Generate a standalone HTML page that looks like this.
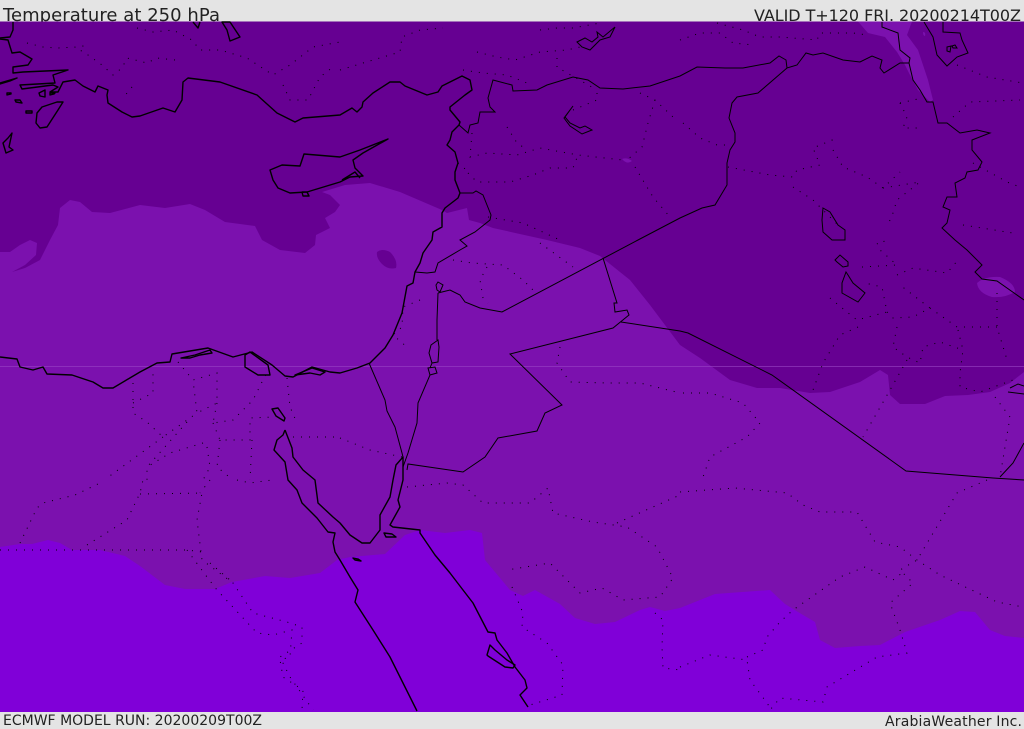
<!DOCTYPE html>
<html><head><meta charset="utf-8"><title>Temperature at 250 hPa</title>
<style>html,body{margin:0;padding:0;width:1024px;height:729px;overflow:hidden;background:#e4e4e4}svg{display:block}text{font-family:"DejaVu Sans",sans-serif;fill:#222}</style></head><body>
<svg xmlns="http://www.w3.org/2000/svg" width="1024" height="729" viewBox="0 0 1024 729">
<rect width="1024" height="729" fill="#e4e4e4"/>
<text x="3" y="21" font-size="18" textLength="217">Temperature at 250 hPa</text>
<text x="754" y="21" font-size="16" textLength="267">VALID T+120 FRI. 20200214T00Z</text>
<text x="3" y="725" font-size="14" textLength="259">ECMWF MODEL RUN: 20200209T00Z</text>
<text x="885" y="726" font-size="14" textLength="137">ArabiaWeather Inc.</text>
<rect y="21.5" width="1024" height="690.5" fill="#8000d8"/>
<path fill="#7b11ae" d="M0,547L20,544 32,544 48,540 60,543 72,550 100,550 125,556 140,566 165,585 185,589 215,589 232,582 265,576 290,578 320,573 337,560 350,557 385,554 405,535 420,530 445,533 470,530 482,533 485,560 495,572 510,590 523,596 535,590 560,604 575,618 595,624 615,622 640,610 650,607 665,611 680,608 715,594 770,590 785,604 798,612 815,622 820,640 835,648 860,646 880,645 905,632 940,620 960,611 975,612 990,630 1005,636 1024,638V21.5H0Z"/>
<path fill="#660092" d="M0,252L10,252 20,245 30,240 37,243 36,255 25,265 12,272 25,268 40,260 50,240 58,225 60,208 70,200 80,202 92,212 110,213 140,205 165,208 190,204 205,210 225,222 255,226 262,240 280,250 305,253 315,245 316,235 330,228 325,218 335,212 340,205 330,195 322,192 345,185 370,183 400,192 442,210 447,213 467,208 469,220 480,223 493,228 547,240 580,248 600,256 630,280 650,305 680,345 700,358 730,380 757,388 780,388 810,393 830,392 860,382 880,370 888,375 890,395 900,404 925,404 945,396 968,395 990,392 1010,383 1024,372V21.5H0Z"/>
<path fill="#7b11ae" d="M858,21.5L868,33 885,37 897,52 905,65 910,75 918,90 930,102 933,100 928,80 918,50 907,35 912,21.5ZM977,283Q985,276 1000,277 1015,283 1015,292 1005,298 992,297 978,293 977,283ZM622,159Q627,157 632,161 627,165 622,159ZM923,32Q926,32 925,36 923,36 923,32Z"/>
<path fill="#660092" d="M377,252Q382,248 390,252 398,260 396,268 388,270 382,264 376,258 377,252Z"/>
<rect y="366" width="1024" height="1" fill="#9a45c4" opacity=".6"/>
<g fill="none" stroke="#000" stroke-width="1" stroke-dasharray="1 7">
<path d="M27,43L43,47 58,48 77,47 90,45M137,28L153,32 173,30 192,40 200,50 220,50 247,58 273,75 290,65 313,47 340,42M175,60L157,58 147,63 127,58 122,68 113,75 102,65 88,55 75,47M132,87L123,98M283,85L290,100 308,100 320,77 333,67"/>
<path d="M340,70L373,60 400,52 402,37 420,30 443,28M477,52L497,57 515,60 540,52 567,50 580,47M463,70L483,73 507,75 527,83M540,30L557,28 573,28 600,23M557,58L557,68 562,70 597,90M472,133L470,157 487,153 517,155 540,148 578,155 623,160M468,173L477,182 510,182 533,175 550,168 573,168 578,155M635,167L653,197 670,217M573,110L597,100 597,90M640,93L655,100 673,117M655,100L648,123 642,147 627,160M507,127L517,143 523,147M458,163L470,173M488,217L523,223 560,240"/>
<path d="M680,40L700,33 720,33 733,43 753,45M717,23L743,30 760,37 780,37 817,40 820,33 853,33 867,35M683,123L700,138 717,145 730,145M728,167L770,175 793,177 797,170 820,165 813,148 837,138M833,150L843,167 867,177 883,188 900,172M883,188L920,182 897,200 893,213 887,227M900,103L922,98M900,103L907,117 903,128 920,128M953,117L970,102 1020,100M957,65L987,77 1023,83M973,163L1007,182 1020,187M963,225L1013,233M793,187L813,200 840,227"/>
<path d="M830,298L847,312 857,320 887,312 882,287 865,283M887,312L893,318 913,317 930,308 922,302 900,285M862,267L897,265 880,250 877,243 890,240M897,275L913,268 947,273 958,260M930,308L957,327 997,327M958,330L963,350 960,373 960,387 980,392 1013,380M897,327L893,347 907,357 920,363 923,347 940,342 963,350M858,327L840,335 823,363 813,390M907,360L890,390 863,437M997,293L997,327 1008,363M995,397L1010,417 1000,477M683,393L710,393 743,403 760,423 747,437 710,457 702,480"/>
<path d="M540,243L573,267M453,260L472,263 503,265 523,280 533,290M487,267L480,280 483,298 488,303M420,300L403,307 402,327 393,335 407,347M560,347L557,363 570,382 607,383 640,383 680,393M340,438L370,450 402,457"/>
<path d="M407,487L447,483 463,485 483,503 530,503 548,488 553,513 593,522 627,527 657,547 673,578 660,597 623,600 602,588 580,593 550,563 507,570M617,523L680,495 680,492 735,488 787,493 803,505 820,512 857,512 875,542 900,547 917,560 940,575 997,602 1023,607M987,480L957,493 917,560 900,570 913,583 890,603 900,630 907,653 877,657 827,687 823,702 780,698 770,710M680,667L710,655 747,660 750,680 767,703 772,711M747,657L763,650 767,637 780,622 793,610 840,577 865,567 893,580 902,573M512,587L523,613 522,627 547,643 563,665 562,695 530,705M655,613L663,620 662,647 663,668 680,670"/>
<path d="M0,550L187,550 202,552M20,543L37,508 43,503 75,495 102,482M87,545L127,520 140,493 143,480M140,494L202,493 197,520 202,560 233,583 253,613 287,622 302,627 302,643 280,657 290,677 313,710M187,550L207,577 217,590 257,633 273,635 292,630 290,657 280,660 283,677 303,690 302,710M210,563L230,580M210,480L200,493M237,480L250,483 272,480"/>
<path d="M133,383L133,413 147,422 163,437 197,413 193,380 217,373 217,403 197,413M133,403L153,393 153,370M163,437L107,478M187,422L147,467 147,480M217,403L213,423 233,420 253,400 263,380 267,373M213,423L220,440 250,440 250,418 273,417M203,443L170,453 147,467M207,447L210,467 203,480M220,440L217,467 233,480M252,440L250,480M178,362L193,380M287,378L290,407 297,423M293,437L337,437"/>
</g>
<g fill="none" stroke="#000" stroke-width="1.4" stroke-linejoin="round">
<path d="M13,22L13,30 10,37 0,38M0,39L8,40 12,53 20,52 32,59 28,65 13,67 13,73 23,72 68,70 53,75 55,83 20,85 22,89 53,85 58,87 50,92 58,92 63,82 75,80 83,86 95,92 98,86 108,90 107,95 108,103 122,112 132,117 140,116 163,108 175,112 182,100 183,82 188,78 220,82 257,95 277,113 295,122 303,118 340,115 352,108 357,112 362,107 363,102 373,93 390,82 400,82 405,86 427,95 438,92 442,86 450,82 462,76 470,80 472,90 465,95 450,107 450,110 460,122 459,125 452,132 450,140 447,145 455,152 458,163 455,172 455,180 460,193 458,198 445,208 442,213 442,227 433,232 432,240 423,253 420,263 415,272 413,283 407,286 402,313 393,335 385,348 370,363 357,368 340,373 330,372 312,367 293,377 285,376 272,365 252,352 233,357 208,348 172,354 170,362 157,363 140,372 113,388 103,388 93,382 72,375 47,374 43,367 33,370 20,367 17,359 0,357"/>
<path d="M181,358L195,355 210,350 212,353 200,355 190,358ZM245,355L250,352 268,365 270,375 258,375 245,367ZM295,375L312,368 325,372 320,375 310,373Z"/>
<path d="M285,430L283,435 277,440 274,450 285,462 288,480 297,490 302,503 317,518 328,532 335,533 333,542 335,552 340,560 350,577 358,590 355,602 373,630 390,657 408,693 417,711M285,430L292,448 293,457 303,470 315,480 318,503 333,517 340,523 350,535 362,543 370,543 380,530 380,515 390,497 393,480 396,465 403,457 403,467 403,480 398,500 400,507 390,525 393,527 420,530 420,533 435,555 450,573 463,590 473,603 488,632 495,633 497,640 507,653 515,667 525,680 527,688 520,695 528,707"/>
<path d="M487,655L490,645 495,650 507,660 515,665 513,668 505,667 488,656ZM353,558L358,559 361,561 355,560ZM272,409L278,408 285,418 284,421 276,416ZM384,533L392,534 396,537 386,537Z"/>
<path d="M270,170L282,165 300,166 304,154 340,157 360,150 388,139 363,153 353,160 355,168 363,176 350,177 340,182 307,192 290,193 278,188 273,180ZM302,192L307,192 309,196 303,196ZM342,180L355,172 360,178"/>
<path d="M63,102L58,110 47,127 40,128 36,123 37,113 42,107 57,102ZM12,133L9,147 13,150 6,153 3,143 8,138ZM26,111L32,111 32,113 26,113ZM15,100L20,100 22,103 16,102ZM7,93L11,93 11,94 7,95ZM39,93L45,90 45,97 40,96ZM50,93L55,93 54,94 50,95ZM0,83L17,78 10,81 0,84ZM200,22L198,28 193,22M222,22L230,22 240,37 230,41 227,30Z"/>
</g>
<g fill="none" stroke="#000" stroke-width="1">
<path d="M436,285L438,282 443,285 440,292 437,290ZM438,340L439,347 438,362 432,363 429,353 431,345ZM428,368L435,367 437,373 430,375ZM438,293L437,320 437,340M432,363L430,368M430,375L418,403 417,423 408,453 403,467M438,293L450,290 460,295 465,302 480,308 502,312 638,240 680,218 702,208 715,205 727,185 727,163 730,150 735,142 735,133 729,118 732,103 737,97 758,93 787,68"/>
<path d="M415,272L427,273 435,272 438,263 460,250 467,246 460,240 475,232 490,220 491,215 487,205 483,195 476,191 473,193 460,193"/>
<path d="M459,125L468,133 470,125 478,123 480,112 495,112 490,107 488,98 493,80 512,85 513,91 537,90 547,85 573,77 588,80 600,88 623,89 650,86 680,76 697,67 725,68 743,68 770,63 779,56 786,60 787,68 797,65 806,53 813,55 823,53 843,60 860,62 872,56 882,60 880,68 884,73 900,63 909,63"/>
<path d="M882,22L882,27 898,33 900,50 910,58 909,63 913,80 920,90 927,102 933,102 938,123 947,123 960,133 977,130 990,133 972,140 972,150 982,162 978,170 967,172 965,178 955,183 957,197 947,197 943,207 950,210 947,223 942,228 955,240 967,250 982,265 975,272 982,279 997,281 1024,300"/>
<path d="M924,22L933,37 937,55 947,66 957,57 968,53 962,40 960,33 943,32 943,22M947,47L951,46 950,52 947,51ZM952,46L955,45 957,48 953,48Z"/>
<path d="M577,42L585,38 592,42 598,37 597,32 603,37 615,27 610,37 600,40 590,50 582,47ZM573,106L565,117 570,123 580,128 585,126 592,130 582,134 570,126 564,118Z"/>
<path d="M823,208L830,212 838,225 845,230 845,240 832,240 823,232 822,220ZM835,260L840,255 848,262 848,266 843,267 837,262ZM846,272L842,283 842,293 858,302 865,293 853,283 848,275Z"/>
<path d="M621,322L680,331 688,333 772,375 906,471 993,478 1024,480M1000,477L1013,463 1024,443"/>
<path d="M603,258L617,303 614,303 615,312 627,310 629,315 613,328 510,354 562,405 545,413 537,431 498,438 485,457 463,472 408,464 407,470M369,363L385,400 387,411 395,427 402,453 403,457"/>
<path d="M1010,388L1018,384 1024,386M1008,392L1024,394"/>
</g>
</svg>
</body></html>
